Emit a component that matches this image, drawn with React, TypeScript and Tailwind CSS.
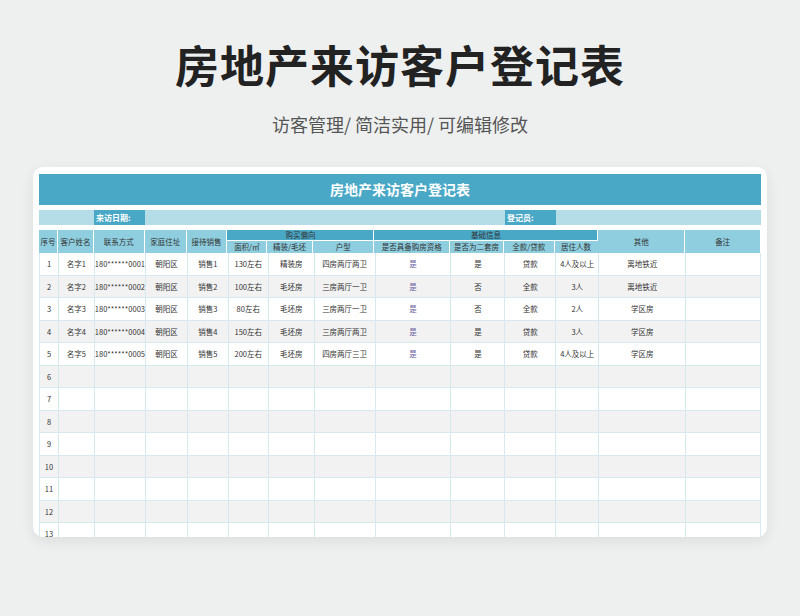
import React from "react";

const W = [19, 36, 51, 42, 41, 40, 46, 61, 76, 54, 51, 43, 87, 76];
const data = [
  ["1", "名字1", "180******0001", "朝阳区", "销售1", "130左右", "精装房", "四房两厅两卫", "是", "是", "贷款", "4人及以上", "离地铁近", ""],
  ["2", "名字2", "180******0002", "朝阳区", "销售2", "100左右", "毛坯房", "三房两厅一卫", "是", "否", "全款", "3人", "离地铁近", ""],
  ["3", "名字3", "180******0003", "朝阳区", "销售3", "80左右", "毛坯房", "三房两厅一卫", "是", "否", "全款", "2人", "学区房", ""],
  ["4", "名字4", "180******0004", "朝阳区", "销售4", "150左右", "毛坯房", "三房两厅两卫", "是", "是", "贷款", "3人", "学区房", ""],
  ["5", "名字5", "180******0005", "朝阳区", "销售5", "200左右", "毛坯房", "四房两厅三卫", "是", "是", "贷款", "4人及以上", "学区房", ""],
];
for (let i = 6; i <= 13; i++) data.push([String(i), "", "", "", "", "", "", "", "", "", "", "", "", ""]);

const font = { fontFamily: '"Noto Sans CJK SC", "Noto Sans", sans-serif' };

export default function App() {
  return (
    <div className="w-[800px] h-[616px] bg-[#eef0f0] flex flex-col items-center overflow-hidden" style={font}>
      <div className="mt-[34px] text-[44px] font-bold text-[#222] leading-[60px] tracking-[1px]">房地产来访客户登记表</div>
      <div className="mt-[18px] text-[18px] text-[#555] leading-[24px]">访客管理/ 简洁实用/ 可编辑修改</div>
      <div className="mt-[31px] w-[734px] h-[370px] bg-white rounded-[10px] shadow-[0_4px_14px_rgba(0,0,0,0.08)] px-[6px] pt-[7px] overflow-hidden">
        <div className="h-[31px] bg-[#4aa8c7] text-white font-bold text-[14px] flex items-center justify-center">房地产来访客户登记表</div>
        <div className="mt-[5px] h-[15px] bg-[#b4dde8] flex text-[8px] text-white font-bold">
          <div className="w-[55px]" />
          <div className="w-[51px] bg-[#4aa8c7] flex items-center pl-[2px]">来访日期:</div>
          <div className="w-[360px]" />
          <div className="w-[51px] bg-[#4aa8c7] flex items-center pl-[2px]">登记员:</div>
        </div>
        <div className="mt-[5px] flex text-[7.5px] text-[#333] h-[23px]">
          {["序号", "客户姓名", "联系方式", "家庭住址", "接待销售"].map((t, i) => (
            <div key={t} style={{ width: W[i] }} className="bg-[#8ecedf] border-r border-white flex items-center justify-center">{t}</div>
          ))}
          <div style={{ width: 147 }} className="flex flex-col border-r border-white">
            <div className="h-[11px] bg-[#4aa8c7] flex items-center justify-center border-b border-white">购买偏向</div>
            <div className="flex flex-1">
              {["面积/㎡", "精装/毛坯", "户型"].map((t, j) => (
                <div key={t} style={{ width: W[5 + j] }} className="bg-[#8ecedf] border-r border-white last:border-r-0 flex items-center justify-center">{t}</div>
              ))}
            </div>
          </div>
          <div style={{ width: 224 }} className="flex flex-col border-r border-white">
            <div className="h-[11px] bg-[#4aa8c7] flex items-center justify-center border-b border-white">基础信息</div>
            <div className="flex flex-1">
              {["是否具备购房资格", "是否为二套房", "全款/贷款", "居住人数"].map((t, j) => (
                <div key={t} style={{ width: W[8 + j] }} className="bg-[#8ecedf] border-r border-white last:border-r-0 flex items-center justify-center whitespace-nowrap">{t}</div>
              ))}
            </div>
          </div>
          {["其他", "备注"].map((t, i) => (
            <div key={t} style={{ width: W[12 + i] }} className="bg-[#8ecedf] border-r border-white flex items-center justify-center">{t}</div>
          ))}
        </div>
        {data.map((r, ri) => (
          <div key={ri} className={`flex h-[22.5px] text-[7.5px] text-[#333] border-b border-[#d6e9f0] ${ri % 2 ? "bg-[#f2f2f2]" : "bg-white"}`}>
            {r.map((c, ci) => (
              <div key={ci} style={{ width: W[ci] }} className={`border-l border-[#d6e9f0] flex items-center justify-center whitespace-nowrap ${ci === 8 ? "text-[#6a5aa0]" : ""} ${ci === 13 ? "border-r" : ""}`}>{c}</div>
            ))}
          </div>
        ))}
      </div>
    </div>
  );
}
